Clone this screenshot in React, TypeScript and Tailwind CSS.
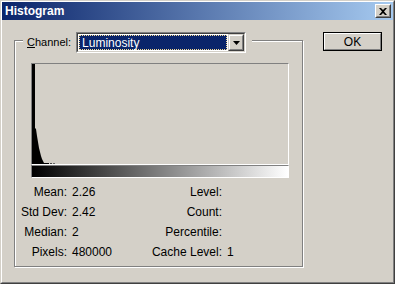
// App.tsx
import React from "react";

const stats: [string, string, string, string][] = [
  ["Mean:", "2.26", "Level:", ""],
  ["Std Dev:", "2.42", "Count:", ""],
  ["Median:", "2", "Percentile:", ""],
  ["Pixels:", "480000", "Cache Level:", "1"],
];

// luminosity spike, drawn in the 256x100 plot area
const spike =
  "0,0 3,0 3,64 4,65 5,72 6,78 7,84 8,88 9,92 10,95 11,97 12,99 17,99 17,100 0,100";

const CloseButton = () => (
  <div className="w-[16px] h-[14px] border border-t-white border-l-white border-r-[#404040] border-b-[#404040] bg-[#d4d0c8]">
    <div className="w-full h-full border border-t-[#d4d0c8] border-l-[#d4d0c8] border-r-[#808080] border-b-[#808080] flex items-center justify-center">
      <svg width="8" height="7" viewBox="0 0 8 7">
        <path d="M0 0h2l2 2 2-2h2L5 3.5 8 7H6L4 5 2 7H0l3-3.5z" fill="#000" />
      </svg>
    </div>
  </div>
);

const ChannelSelect = () => (
  <div className="w-[170px] h-[21px] border border-t-[#808080] border-l-[#808080] border-b-white border-r-white">
    <div className="w-full h-full border border-t-[#404040] border-l-[#404040] border-b-[#d4d0c8] border-r-[#d4d0c8] bg-white flex">
      <div className="flex-1 p-[1px]">
        <div className="h-full bg-[#0a246a] border border-dotted border-[#f5db95] text-white text-[12px] leading-[15px] pl-[2px]">
          Luminosity
        </div>
      </div>
      <div className="w-[16px] h-full border border-t-[#d4d0c8] border-l-[#d4d0c8] border-r-[#404040] border-b-[#404040] bg-[#d4d0c8]">
        <div className="w-full h-full border border-t-white border-l-white border-r-[#808080] border-b-[#808080] flex items-center justify-center">
          <svg width="7" height="4" viewBox="0 0 7 4">
            <path d="M0 0h7L3.5 4z" fill="#000" />
          </svg>
        </div>
      </div>
    </div>
  </div>
);

const App = () => {
  return (
    <div className="w-[395px] h-[284px] font-['Liberation_Sans',Arial,sans-serif] text-black select-none">
      <div className="w-full h-full border border-t-[#d4d0c8] border-l-[#d4d0c8] border-r-[#404040] border-b-[#404040] bg-[#d4d0c8]">
        <div className="w-full h-full border border-t-white border-l-white border-r-[#808080] border-b-[#808080] flex flex-col">
          {/* title bar */}
          <div className="h-[18px] bg-[linear-gradient(to_right,#0a246a,#a6caf0)] flex items-center justify-between pl-[3px] pr-[2px]">
            <span className="text-white font-bold text-[12px] leading-none">Histogram</span>
            <CloseButton />
          </div>

          {/* body */}
          <div className="flex items-start pl-[12px]">
            {/* group box */}
            <div className="mt-[20px] w-[289px] h-[227px] border border-[#808080] shadow-[1px_1px_0_#fff,inset_1px_1px_0_#fff]">
              <div className="-mt-[9px] ml-[8px] w-fit bg-[#d4d0c8] pl-[4px] pr-[6px] flex items-center gap-[5px]">
                <span className="text-[11px] leading-[21px]">
                  <span className="underline">C</span>hannel:
                </span>
                <ChannelSelect />
              </div>

              {/* histogram plot */}
              <div className="ml-[16px] mt-[10px] w-[258px]">
                <div className="h-[102px] border border-t-[#808080] border-l-[#808080] border-r-white border-b-white">
                  <svg width="256" height="100" viewBox="0 0 256 100" className="block">
                    <polygon points={spike} fill="#000" />
                    <rect x="18" y="99" width="2" height="1" fill="#444" />
                    <rect x="21" y="99" width="2" height="1" fill="#666" />
                  </svg>
                </div>
                <div className="h-[13px] border border-t-[#808080] border-l-[#808080] border-r-white border-b-white">
                  <div className="h-full bg-[linear-gradient(to_right,#000,#fff)]" />
                </div>
              </div>

              {/* statistics */}
              <div className="mt-[4px] text-[12px]">
                {stats.map(([l1, v1, l2, v2]) => (
                  <div key={l1} className="flex h-[20px] items-center">
                    <span className="w-[52px] text-right whitespace-nowrap">{l1}</span>
                    <span className="w-[83px] pl-[5px]">{v1}</span>
                    <span className="w-[72px] text-right whitespace-nowrap">{l2}</span>
                    <span className="pl-[5px]">{v2}</span>
                  </div>
                ))}
              </div>
            </div>

            {/* OK button */}
            <div className="mt-[12px] ml-[20px] w-[59px] h-[19px] border border-black">
              <div className="w-full h-full border border-t-white border-l-white border-r-[#808080] border-b-[#808080] flex items-center justify-center text-[12px]">
                OK
              </div>
            </div>
          </div>
        </div>
      </div>
    </div>
  );
};

export default App;
